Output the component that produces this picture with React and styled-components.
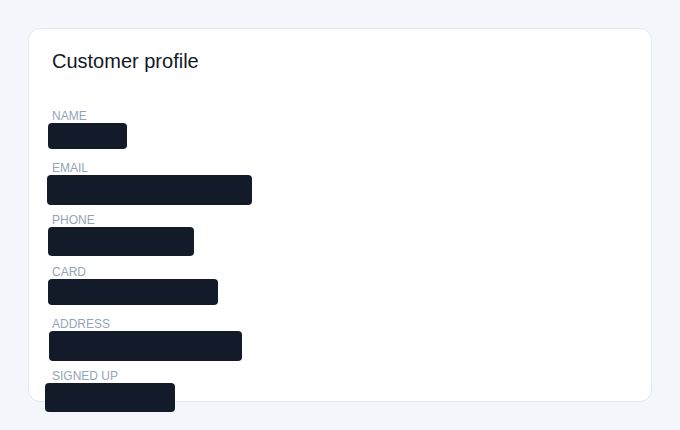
import React from "react";
import styled, { createGlobalStyle } from "styled-components";

const Global = createGlobalStyle`
  html, body { margin: 0; padding: 0; }
  body {
    background: #f3f6fa;
    font-family: "Liberation Sans", Arial, sans-serif;
  }
  * { box-sizing: border-box; }
`;

const Page = styled.div`
  padding: 28px;
  height: 100vh;
  display: flex;
  flex-direction: column;
`;

const Card = styled.section`
  flex: 1;
  min-height: 0;
  background: #ffffff;
  border: 1px solid #e2e8f0;
  border-radius: 12px;
  padding: 20px 23px;
  display: flex;
  flex-direction: column;
`;

const Title = styled.h2`
  margin: 0 0 35px;
  font-size: 20px;
  line-height: 24px;
  font-weight: 400;
  color: #111827;
`;

const Fields = styled.dl`
  margin: 0;
  display: flex;
  flex-direction: column;
  gap: 12px;
`;

const Field = styled.div`
  display: flex;
  flex-direction: column;
`;

const Label = styled.dt`
  font-size: 12px;
  line-height: 16px;
  color: #94a3b8;
  text-transform: uppercase;
`;

const Value = styled.dd`
  margin: 0;
  position: relative;
  height: 24px;
  font-size: 14px;
  line-height: 24px;
  color: #111827;
`;

const Redact = styled.span`
  position: absolute;
  left: ${(p) => p.$x}px;
  top: -1px;
  width: ${(p) => p.$w}px;
  height: ${(p) => p.$h}px;
  background: #131a29;
  border-radius: 4px;
`;

const rows = [
  { label: "Name", x: -4, w: 79, h: 26 },
  { label: "Email", x: -5, w: 205, h: 30 },
  { label: "Phone", x: -4, w: 146, h: 29 },
  { label: "Card", x: -4, w: 170, h: 26 },
  { label: "Address", x: -3, w: 193, h: 30 },
  { label: "Signed up", x: -7, w: 130, h: 29 },
];

export default function App() {
  return (
    <>
      <Global />
      <Page>
        <Card>
          <Title>Customer profile</Title>
          <Fields>
            {rows.map((r) => (
              <Field key={r.label}>
                <Label>{r.label}</Label>
                <Value>
                  <Redact $x={r.x} $w={r.w} $h={r.h} />
                </Value>
              </Field>
            ))}
          </Fields>
        </Card>
      </Page>
    </>
  );
}
